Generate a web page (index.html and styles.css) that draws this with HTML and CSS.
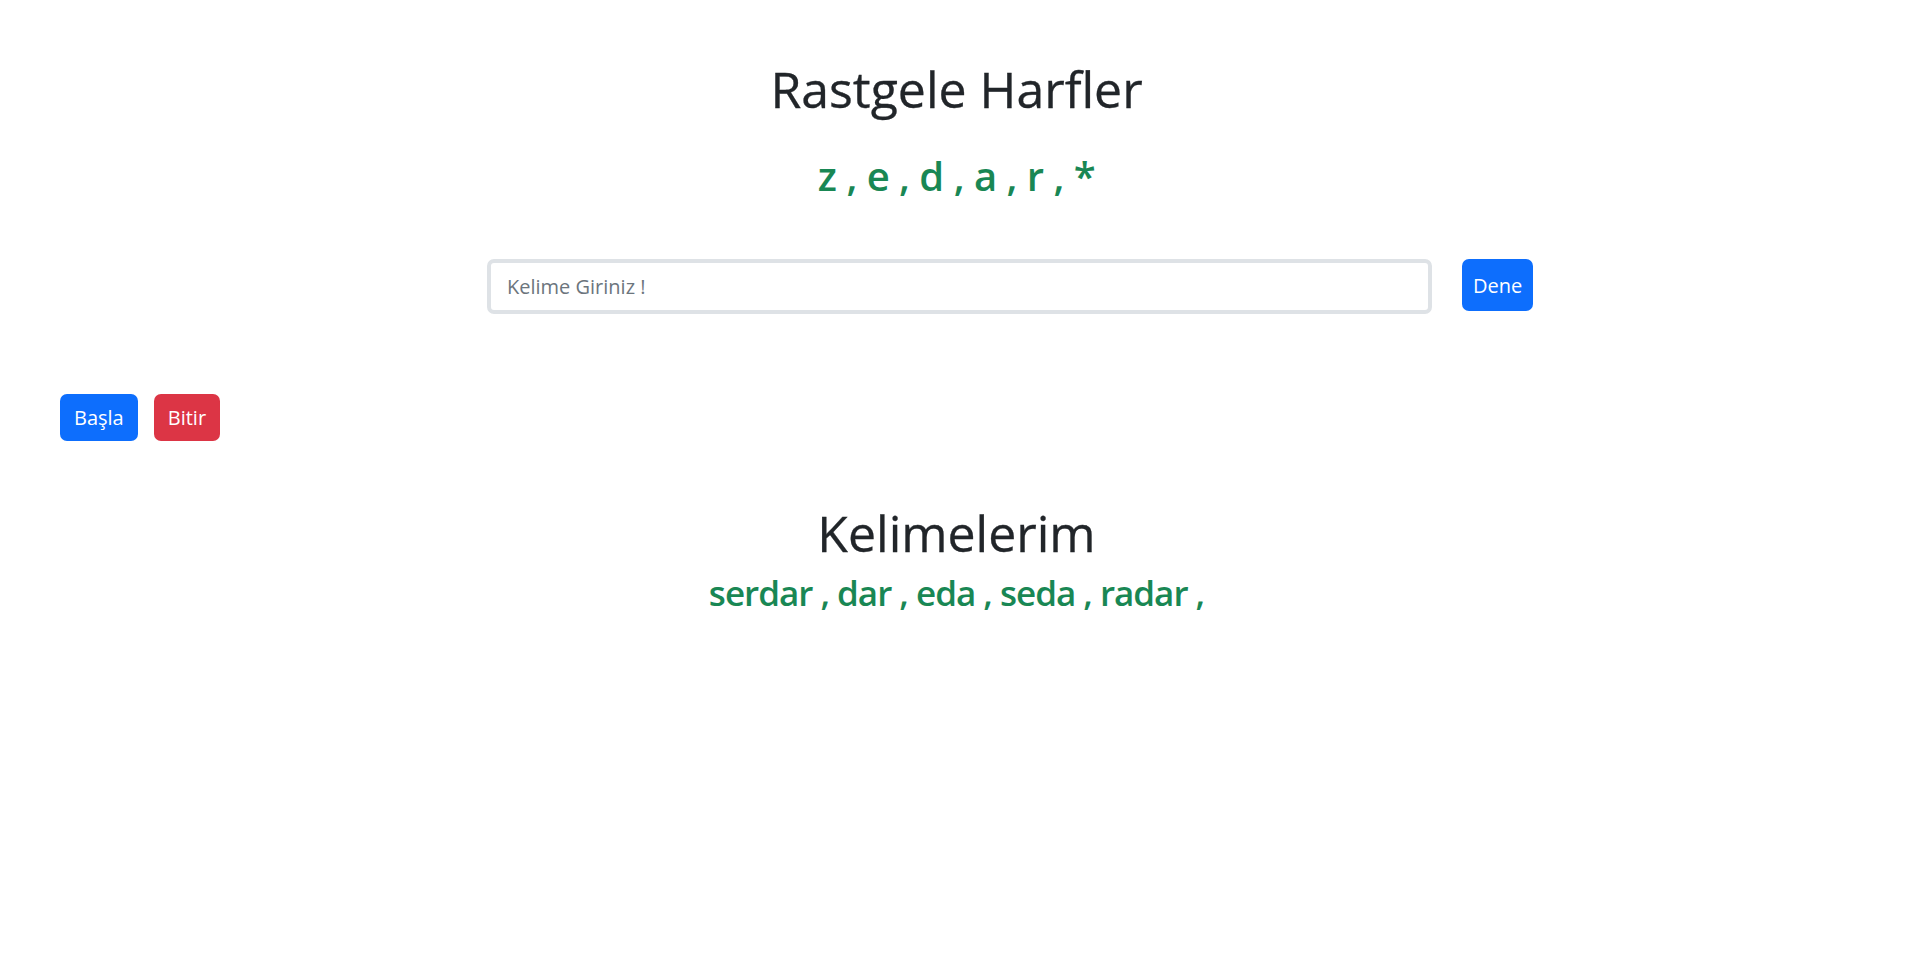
FILE: index.html
```html
<!DOCTYPE html>
<html lang="tr">
<head>
<meta charset="utf-8">
<title>Rastgele Harfler</title>
<link rel="stylesheet" href="styles.css">
</head>
<body>
<div class="page">
  <h1 class="title">Rastgele Harfler</h1>
  <h2 class="letters">z , e , d , a , r , *</h2>
  <div class="entry">
    <input class="word-input" type="text" placeholder="Kelime Giriniz !">
    <button class="btn btn-blue btn-try">Dene</button>
  </div>
  <div class="controls">
    <button class="btn btn-blue">Başla</button>
    <button class="btn btn-red">Bitir</button>
  </div>
  <h1 class="title words-title">Kelimelerim</h1>
  <h3 class="words">serdar , dar , eda , seda , radar ,</h3>
</div>
</body>
</html>
```
FILE: styles.css
```css
* { box-sizing: border-box; }
body {
  margin: 0;
  background: #fff;
  font-family: "Open Sans", "Noto Sans", "Liberation Sans", sans-serif;
  color: #212529;
}
.page {
  padding-top: 59px;
}
.title {
  margin: 0;
  text-align: center;
  font-size: 50px;
  font-weight: 500;
  line-height: 60px;
  color: #212529;
  -webkit-text-stroke: 0.3px #212529;
}
.letters {
  margin: 33px 0 0;
  text-align: center;
  font-size: 40px;
  font-weight: 600;
  line-height: 48px;
  letter-spacing: -0.5px;
  color: #198754;
}
.entry {
  display: flex;
  align-items: flex-start;
  gap: 30px;
  padding-left: 487px;
  margin-top: 59px;
}
.word-input {
  width: 945px;
  height: 55px;
  border: 4px solid #dee2e6;
  border-radius: 7px;
  padding: 0 16px;
  font-family: inherit;
  font-size: 20px;
  color: #212529;
  outline: none;
}
.word-input::placeholder {
  color: #6c757d;
}
.btn {
  border: 0;
  border-radius: 7px;
  color: #fff;
  font-family: inherit;
  font-size: 20px;
  height: 47px;
  padding: 0 14px;
  cursor: pointer;
}
.btn-try { height: 52px; padding: 0 11px; }
.btn-blue { background: #0d6efd; }
.btn-red { background: #dc3545; }
.controls {
  display: flex;
  gap: 16px;
  padding-left: 60px;
  margin-top: 80px;
}
.words-title {
  margin-top: 62px;
}
.words {
  margin: 9px 0 0;
  text-align: center;
  font-size: 35px;
  font-weight: 600;
  line-height: 42px;
  letter-spacing: -1px;
  color: #198754;
}
```
